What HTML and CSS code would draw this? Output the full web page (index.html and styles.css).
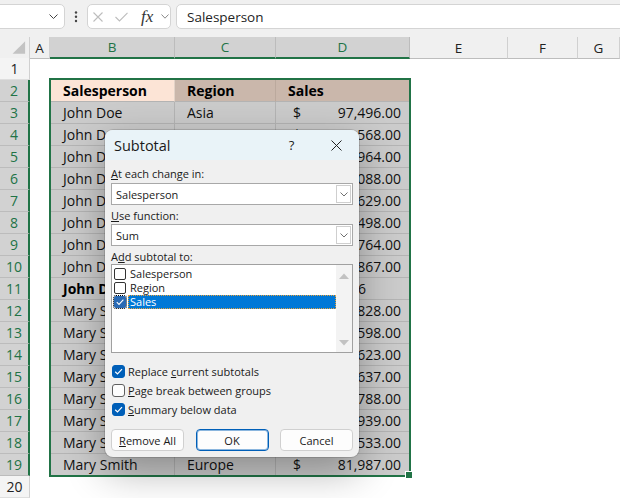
FILE: index.html
```html
<!DOCTYPE html>
<html>
<head>
<meta charset="utf-8">
<title>Subtotal</title>
<link rel="stylesheet" href="styles.css">
</head>
<body>
<div class="fbar">
  <div class="namebox"><svg width="9" height="5" viewBox="0 0 9 5"><path d="M0.5 0.5 L4.5 4.5 L8.5 0.5" fill="none" stroke="#444" stroke-width="1"/></svg></div>
  <div class="more"><svg width="4" height="12" viewBox="0 0 4 12"><circle cx="2" cy="1.5" r="1.2" fill="#444"/><circle cx="2" cy="5.8" r="1.2" fill="#444"/><circle cx="2" cy="10" r="1.2" fill="#444"/></svg></div>
  <div class="fnbox">
    <svg class="ico-x" width="10" height="10" viewBox="0 0 10 10"><path d="M0.5 0.5 L9.5 9.5 M9.5 0.5 L0.5 9.5" stroke="#bdbdbd" stroke-width="1.1"/></svg>
    <svg class="ico-ok" width="13" height="10" viewBox="0 0 13 10"><path d="M0.5 5 L4.5 9 L12.5 0.8" fill="none" stroke="#bdbdbd" stroke-width="1.1"/></svg>
    <span class="fx">fx</span>
    <svg class="ico-ch" width="8" height="5" viewBox="0 0 8 5"><path d="M0.5 0.5 L4 4.2 L7.5 0.5" fill="none" stroke="#8a8a8a" stroke-width="1"/></svg>
  </div>
  <div class="formula">Salesperson</div>
</div>

<div class="sheet">
  <div class="row hdr">
    <div class="corner"><svg width="30" height="21" viewBox="0 0 30 21"><polygon points="13,17 26,17 26,4" fill="#c3c3c3"/></svg></div>
    <div class="ch">A</div>
    <div class="ch sel">B</div>
    <div class="ch sel">C</div>
    <div class="ch sel">D</div>
    <div class="ch">E</div>
    <div class="ch">F</div>
    <div class="ch">G</div>
  </div>
  <div class="row"><div class="rh">1</div></div>
  <div class="row"><div class="rh sel">2</div><div></div><div class="t b th act">Salesperson</div><div class="t c th tan">Region</div><div class="t d dh th tan">Sales</div></div>
  <div class="row"><div class="rh sel">3</div><div></div><div class="t b">John Doe</div><div class="t c">Asia</div><div class="t d"><span>$</span><span>97,496.00</span></div></div>
  <div class="row"><div class="rh sel">4</div><div></div><div class="t b">John D</div><div class="t c"></div><div class="t d"><span>$</span><span>45,568.00</span></div></div>
  <div class="row"><div class="rh sel">5</div><div></div><div class="t b">John D</div><div class="t c"></div><div class="t d"><span></span><span>964.00</span></div></div>
  <div class="row"><div class="rh sel">6</div><div></div><div class="t b">John D</div><div class="t c"></div><div class="t d"><span></span><span>088.00</span></div></div>
  <div class="row"><div class="rh sel">7</div><div></div><div class="t b">John D</div><div class="t c"></div><div class="t d"><span></span><span>629.00</span></div></div>
  <div class="row"><div class="rh sel">8</div><div></div><div class="t b">John D</div><div class="t c"></div><div class="t d"><span></span><span>498.00</span></div></div>
  <div class="row"><div class="rh sel">9</div><div></div><div class="t b">John D</div><div class="t c"></div><div class="t d"><span></span><span>764.00</span></div></div>
  <div class="row"><div class="rh sel">10</div><div></div><div class="t b">John D</div><div class="t c"></div><div class="t d"><span></span><span>867.00</span></div></div>
  <div class="row"><div class="rh sel">11</div><div></div><div class="t b th">John D</div><div class="t c"></div><div class="t d tot">6</div></div>
  <div class="row"><div class="rh sel">12</div><div></div><div class="t b">Mary S</div><div class="t c"></div><div class="t d"><span></span><span>828.00</span></div></div>
  <div class="row"><div class="rh sel">13</div><div></div><div class="t b">Mary S</div><div class="t c"></div><div class="t d"><span></span><span>598.00</span></div></div>
  <div class="row"><div class="rh sel">14</div><div></div><div class="t b">Mary S</div><div class="t c"></div><div class="t d"><span></span><span>623.00</span></div></div>
  <div class="row"><div class="rh sel">15</div><div></div><div class="t b">Mary S</div><div class="t c"></div><div class="t d"><span></span><span>637.00</span></div></div>
  <div class="row"><div class="rh sel">16</div><div></div><div class="t b">Mary S</div><div class="t c"></div><div class="t d"><span></span><span>788.00</span></div></div>
  <div class="row"><div class="rh sel">17</div><div></div><div class="t b">Mary S</div><div class="t c"></div><div class="t d"><span></span><span>939.00</span></div></div>
  <div class="row"><div class="rh sel">18</div><div></div><div class="t b">Mary S</div><div class="t c"></div><div class="t d"><span></span><span>533.00</span></div></div>
  <div class="row"><div class="rh sel">19</div><div></div><div class="t b">Mary Smith</div><div class="t c">Europe</div><div class="t d"><span>$</span><span>81,987.00</span></div></div>
  <div class="row"><div class="rh">20</div></div>
</div>

<div class="selbox"></div>
<div class="handle"></div>

<div class="dlg">
  <div class="dtitle">
    <span class="dtext">Subtotal</span>
    <span class="tbtn">?</span>
    <span class="tbtn"><svg width="11" height="11" viewBox="0 0 11 11"><path d="M0.5 0.5 L10.5 10.5 M10.5 0.5 L0.5 10.5" stroke="#222" stroke-width="1"/></svg></span>
  </div>
  <div class="dbody">
    <div class="lbl"><u>A</u>t each change in:</div>
    <div class="combo"><span class="ctext">Salesperson</span><span class="carrow"><svg width="8" height="5" viewBox="0 0 8 5"><path d="M0.5 0.5 L4 4 L7.5 0.5" fill="none" stroke="#707070" stroke-width="1"/></svg></span></div>
    <div class="lbl l2"><u>U</u>se function:</div>
    <div class="combo c2"><span class="ctext">Sum</span><span class="carrow"><svg width="8" height="5" viewBox="0 0 8 5"><path d="M0.5 0.5 L4 4 L7.5 0.5" fill="none" stroke="#707070" stroke-width="1"/></svg></span></div>
    <div class="lbl l2">A<u>d</u>d subtotal to:</div>
    <div class="list">
      <div class="items">
        <div class="item"><span class="lcb"></span><span class="ltx">Salesperson</span></div>
        <div class="item"><span class="lcb"></span><span class="ltx">Region</span></div>
        <div class="item"><span class="lcb on"><svg width="10" height="10" viewBox="0 0 10 10"><path d="M1.8 5.2 L4 7.4 L8.4 2.6" fill="none" stroke="#fff" stroke-width="1.1"/></svg></span><span class="ltx hl">Sales</span></div>
      </div>
      <div class="vscroll">
        <svg width="10" height="6" viewBox="0 0 10 6"><polygon points="0,6 10,6 5,0.5" fill="#c2c2c2"/></svg>
        <svg width="10" height="6" viewBox="0 0 10 6"><polygon points="0,0 10,0 5,5.5" fill="#c2c2c2"/></svg>
      </div>
    </div>
    <div class="opts">
      <div class="opt"><span class="cb on"><svg width="11" height="11" viewBox="0 0 11 11"><path d="M2.2 5.8 L4.5 8 L9 3.2" fill="none" stroke="#fff" stroke-width="1.2"/></svg></span><span>Replace <u>c</u>urrent subtotals</span></div>
      <div class="opt"><span class="cb"></span><span><u>P</u>age break between groups</span></div>
      <div class="opt"><span class="cb on"><svg width="11" height="11" viewBox="0 0 11 11"><path d="M2.2 5.8 L4.5 8 L9 3.2" fill="none" stroke="#fff" stroke-width="1.2"/></svg></span><span><u>S</u>ummary below data</span></div>
    </div>
    <div class="btns">
      <div class="btn"><span><u>R</u>emove All</span></div>
      <div class="btn def">OK</div>
      <div class="btn">Cancel</div>
    </div>
  </div>
</div>
</body>
</html>
```

FILE: styles.css
```css
* { box-sizing: border-box; }
html, body { margin: 0; padding: 0; }
body {
  width: 620px;
  height: 498px;
  overflow: hidden;
  position: relative;
  background: #fff;
  font-family: "Open Sans", "Noto Sans", sans-serif;
  color: #000;
}

/* formula bar */
.fbar {
  height: 37px;
  background: #f0f0f0;
  display: flex;
  align-items: flex-start;
  padding-top: 4px;
}
.namebox {
  margin-left: -6px;
  width: 71px;
  height: 25px;
  background: #fff;
  border: 1px solid #d4d4d4;
  border-radius: 5px;
  display: flex;
  align-items: center;
  justify-content: flex-end;
  padding-right: 6px;
}
.more {
  width: 22px;
  height: 25px;
  display: flex;
  align-items: center;
  justify-content: center;
}
.fnbox {
  width: 84px;
  height: 25px;
  background: #fff;
  border: 1px solid #d4d4d4;
  border-radius: 5px;
  display: flex;
  align-items: center;
  padding-left: 5px;
}
.ico-ok { margin-left: 12px; }
.fx {
  margin-left: 13px;
  font-family: "Liberation Serif", "DejaVu Serif", serif;
  font-style: italic;
  font-size: 17px;
  color: #333;
  line-height: 1;
  width: 15px;
}
.ico-ch { margin-left: 5px; }
.formula {
  flex: 1;
  margin-left: 5px;
  margin-right: -10px;
  height: 25px;
  background: #fff;
  border: 1px solid #d4d4d4;
  border-radius: 5px;
  padding-left: 10px;
  font-size: 13.5px;
  color: #242424;
  display: flex;
  align-items: center;
}

/* sheet */
.row {
  display: grid;
  grid-template-columns: 30px 20px 125px 101px 134px 98px 70px 42px;
  height: 22px;
}
.row.hdr { height: 21px; }
.corner {
  background: #f0f0f0;
  border-right: 1px solid #d0d0d0;
  border-bottom: 1px solid #bdbdbd;
  display: flex;
}
.ch {
  background: #f0f0f0;
  border-right: 1px solid #d0d0d0;
  border-bottom: 1px solid #bdbdbd;
  display: flex;
  align-items: center;
  justify-content: center;
  font-size: 13.5px;
  color: #222;
}
.ch.sel {
  background: #d2d2d2;
  color: #217346;
  border-right-color: #bcbcbc;
  border-bottom: 2px solid #217346;
}
.rh {
  background: #f4f4f4;
  border-right: 1px solid #d0d0d0;
  border-bottom: 1px solid #dedede;
  display: flex;
  align-items: center;
  justify-content: center;
  font-size: 14px;
  color: #222;
}
.rh.sel {
  background: #d2d2d2;
  color: #217346;
  border-right: 2px solid #217346;
  border-bottom-color: #bcbcbc;
}
.t {
  background: #cbcbcb;
  border-right: 1px solid #b4b4b4;
  border-bottom: 1px solid #b4b4b4;
  display: flex;
  align-items: center;
  font-size: 14px;
  color: #111;
  white-space: nowrap;
  overflow: hidden;
}
.b { padding-left: 13px; }
.c { padding-left: 12px; }
.d { padding: 0 8px 0 17px; justify-content: space-between; }
.d.dh { padding-left: 12px; justify-content: flex-start; }
.d.tot { justify-content: flex-start; padding-left: 82px; }
.th { font-weight: 700; color: #000; }
.act { background: #fce4d6; border-right-color: #e3d3c8; }
.tan { background: #cab7ab; border-right-color: #bba99d; }

/* selection */
.selbox {
  position: absolute;
  left: 49px;
  top: 78px;
  width: 362px;
  height: 399px;
  border: 2px solid #217346;
}
.handle {
  position: absolute;
  left: 406px;
  top: 472px;
  width: 6px;
  height: 6px;
  background: #217346;
  outline: 1px solid #fff;
}

/* dialog */
.dlg {
  position: absolute;
  left: 105px;
  top: 130px;
  width: 254px;
  height: 327px;
  background: #f0f0f0;
  border-radius: 8px;
  box-shadow: 0 0 0 1px rgba(0, 0, 0, 0.13), 0 14px 40px rgba(0, 0, 0, 0.32);
  overflow: hidden;
  font-size: 11px;
  color: #1a1a1a;
  display: flex;
  flex-direction: column;
}
.dtitle {
  height: 30px;
  background: #e9f3f8;
  display: flex;
  align-items: center;
  padding-left: 9px;
}
.dtext { flex: 1; font-size: 14.5px; color: #1a1a1a; }
.tbtn {
  width: 45px;
  height: 30px;
  display: flex;
  align-items: center;
  justify-content: center;
  font-size: 13px;
  color: #222;
}
.dbody {
  padding: 6px 6px 0;
  display: flex;
  flex-direction: column;
}
.lbl { height: 15px; line-height: 15px; }
.l2 { margin-top: 3px; }
.combo {
  margin-top: 2px;
  height: 22px;
  background: #fff;
  border: 1px solid #a8a8a8;
  display: flex;
  align-items: center;
  padding: 0 1px 0 4px;
}
.combo.c2 { margin-top: 1px; }
.ctext { flex: 1; }
.carrow {
  width: 15px;
  height: 18px;
  border: 1px solid #cfcfcf;
  background: #fff;
  display: flex;
  align-items: center;
  justify-content: center;
}
.list {
  height: 89px;
  background: #fff;
  border: 1px solid #a0a0a0;
  display: flex;
}
.items { flex: 1; padding: 2px 0 0 2px; }
.item { height: 14px; display: flex; align-items: center; }
.lcb {
  width: 12px;
  height: 12px;
  border: 1px solid #333;
  border-radius: 2px;
  background: #fff;
  display: flex;
  align-items: center;
  justify-content: center;
}
.lcb.on {
  background: #2a6ab4;
  border-color: #2a6ab4;
  outline: 1px dotted #000;
}
.ltx {
  flex: 1;
  margin-left: 2px;
  padding-left: 2px;
  height: 14px;
  line-height: 14px;
}
.ltx.hl {
  background: #0078d7;
  color: #fff;
  outline: 1px dotted #e9a23b;
  outline-offset: -1px;
}
.vscroll {
  width: 16px;
  background: #f3f3f3;
  display: flex;
  flex-direction: column;
  justify-content: space-between;
  align-items: center;
  padding: 8px 0 6px;
}
.opts { margin-top: 9px; }
.opt { height: 19px; display: flex; align-items: center; }
.cb {
  width: 13px;
  height: 13px;
  margin-left: 1px;
  margin-right: 3px;
  border-radius: 3px;
  border: 1px solid #5f5f5f;
  background: #fdfdfd;
  display: flex;
  align-items: center;
  justify-content: center;
}
.cb.on { background: #005fb8; border-color: #005fb8; }
.btns {
  margin-top: 10px;
  display: flex;
  justify-content: space-between;
}
.btn {
  width: 73px;
  height: 22px;
  border: 1px solid #d0d0d0;
  border-radius: 4px;
  background: #fdfdfd;
  display: flex;
  align-items: center;
  justify-content: center;
}
.btn.def {
  border-color: #005fb8;
  box-shadow: inset 0 0 0 1px rgba(0, 95, 184, 0.45);
}
```
